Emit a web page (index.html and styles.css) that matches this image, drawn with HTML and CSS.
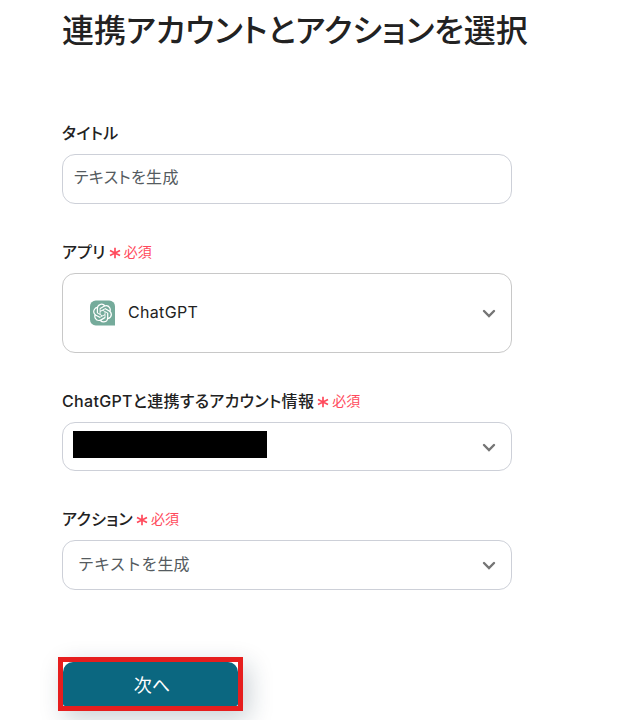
FILE: index.html
```
<!DOCTYPE html>
<html lang="ja">
<head>
<meta charset="utf-8">
<meta name="viewport" content="width=device-width, initial-scale=1">
<title>連携アカウントとアクションを選択</title>
<link rel="stylesheet" href="styles.css">
</head>
<body>
<main class="page">
  <h1 class="heading">連携アカウントとアクションを選択</h1>
  <form class="form">
    <div class="field">
      <div class="label-row"><label for="title">タイトル</label></div>
      <input class="control control-text" id="title" type="text" value="テキストを生成">
    </div>
    <div class="field">
      <div class="label-row">
        <label for="app">アプリ</label>
        <span class="required"><svg class="star" viewBox="0 0 12 12" aria-hidden="true"><path d="M6 .8v10.4M1 3.4l10 5.2M11 3.4L1 8.6"/></svg>必須</span>
      </div>
      <div class="select-box">
        <select class="control control-app" id="app"><option>ChatGPT</option></select>
        <svg class="app-icon" viewBox="0 0 26 26" aria-hidden="true">
          <path fill="#75ab9b" d="M6 0h14a6 6 0 0 1 6 6v20H6a6 6 0 0 1-6-6V6a6 6 0 0 1 6-6z"/>
          <path fill="#fff" transform="translate(3.2 3.2) scale(.82)" d="M22.2819 9.8211a5.9847 5.9847 0 0 0-.5157-4.9108 6.0462 6.0462 0 0 0-6.5098-2.9A6.0651 6.0651 0 0 0 4.9807 4.1818a5.9847 5.9847 0 0 0-3.9977 2.9 6.0462 6.0462 0 0 0 .7427 7.0966 5.98 5.98 0 0 0 .511 4.9107 6.051 6.051 0 0 0 6.5146 2.9001A5.9847 5.9847 0 0 0 13.2599 24a6.0557 6.0557 0 0 0 5.7718-4.2058 5.9894 5.9894 0 0 0 3.9977-2.9001 6.0557 6.0557 0 0 0-.7475-7.073zm-9.022 12.6081a4.4755 4.4755 0 0 1-2.8764-1.0408l.1419-.0804 4.7783-2.7582a.7948.7948 0 0 0 .3927-.6813v-6.7369l2.02 1.1686a.071.071 0 0 1 .038.052v5.5826a4.504 4.504 0 0 1-4.4945 4.4944zm-9.6607-4.1254a4.4708 4.4708 0 0 1-.5346-3.0137l.142.0852 4.783 2.7582a.7712.7712 0 0 0 .7806 0l5.8428-3.3685v2.3324a.0804.0804 0 0 1-.0332.0615L9.74 19.9502a4.4992 4.4992 0 0 1-6.1408-1.6464zM2.3408 7.8956a4.485 4.485 0 0 1 2.3655-1.9728V11.6a.7664.7664 0 0 0 .3879.6765l5.8144 3.3543-2.0201 1.1685a.0757.0757 0 0 1-.071 0l-4.8303-2.7865A4.504 4.504 0 0 1 2.3408 7.872zm16.5963 3.8558L13.1038 8.364 15.1192 7.2a.0757.0757 0 0 1 .071 0l4.8303 2.7913a4.4944 4.4944 0 0 1-.6765 8.1042v-5.6772a.79.79 0 0 0-.407-.667zm2.0107-3.0231l-.142-.0852-4.7735-2.7818a.7759.7759 0 0 0-.7854 0L9.409 9.2297V6.8974a.0662.0662 0 0 1 .0284-.0615l4.8303-2.7866a4.4992 4.4992 0 0 1 6.6802 4.66zM8.3065 12.863l-2.02-1.1638a.0804.0804 0 0 1-.038-.0567V6.0742a4.4992 4.4992 0 0 1 7.3757-3.4537l-.142.0805L8.704 5.459a.7948.7948 0 0 0-.3927.6813zm1.0976-2.3654l2.602-1.4998 2.6069 1.4998v2.9994l-2.5974 1.4997-2.6067-1.4997Z"/>
        </svg>
        <svg class="chevron" viewBox="0 0 14 10" aria-hidden="true"><path d="M2 2l5 5 5-5"/></svg>
      </div>
    </div>
    <div class="field">
      <div class="label-row">
        <label for="account">ChatGPTと連携するアカウント情報</label>
        <span class="required"><svg class="star" viewBox="0 0 12 12" aria-hidden="true"><path d="M6 .8v10.4M1 3.4l10 5.2M11 3.4L1 8.6"/></svg>必須</span>
      </div>
      <div class="select-box">
        <select class="control control-account" id="account"></select>
        <span class="redaction"></span>
        <svg class="chevron" viewBox="0 0 14 10" aria-hidden="true"><path d="M2 2l5 5 5-5"/></svg>
      </div>
    </div>
    <div class="field">
      <div class="label-row">
        <label for="action">アクション</label>
        <span class="required"><svg class="star" viewBox="0 0 12 12" aria-hidden="true"><path d="M6 .8v10.4M1 3.4l10 5.2M11 3.4L1 8.6"/></svg>必須</span>
      </div>
      <div class="select-box">
        <select class="control control-action" id="action"><option>テキストを生成</option></select>
        <svg class="chevron" viewBox="0 0 14 10" aria-hidden="true"><path d="M2 2l5 5 5-5"/></svg>
      </div>
    </div>
    <div class="highlight"><button class="next" type="button">次へ</button></div>
  </form>
</main>
</body>
</html>
```
FILE: styles.css
```
* {
  box-sizing: border-box;
}

body {
  margin: 0;
  background: #fff;
  color: #222;
  font-family: Inter, "Noto Sans CJK JP", sans-serif;
  font-size: 16px;
  font-feature-settings: "palt";
}

.page {
  min-height: 100vh;
  padding: 7px 62px 9px;
  overflow: hidden;
}

.heading {
  margin: 0 0 66px;
  font-size: 32px;
  line-height: 48px;
  font-weight: 500;
  white-space: nowrap;
}

.form {
  max-width: 450px;
}

.field {
  margin-bottom: 36px;
}

.label-row {
  display: flex;
  align-items: center;
  gap: 3px;
  height: 24px;
  margin-bottom: 9px;
  font-size: 16px;
  line-height: 24px;
  font-weight: 500;
  letter-spacing: 0.02em;
  white-space: nowrap;
}

.required {
  display: flex;
  align-items: center;
  gap: 3px;
  color: #ff4a5c;
  font-size: 14px;
  font-weight: 400;
  letter-spacing: 0;
}

.star {
  width: 12px;
  height: 12px;
  margin-top: 2px;
  fill: none;
  stroke: currentColor;
  stroke-width: 1.7;
}

.control {
  display: block;
  width: 100%;
  height: 50px;
  margin: 0;
  border: 1px solid #cdd0d8;
  border-radius: 13px;
  background: #fff;
  color: #555b60;
  font: inherit;
  font-feature-settings: inherit;
  letter-spacing: 0.02em;
  appearance: none;
}

.control-text {
  padding: 0 11px 6px;
}

.control-app {
  height: 80px;
  padding: 0 40px 2px 65px;
  border-color: #c8c8c8;
  color: #222;
}

.control-account {
  height: 49px;
}

.control-action {
  padding: 0 40px 2px 15px;
  font-feature-settings: normal;
  letter-spacing: 0;
}

.select-box {
  position: relative;
}

.app-icon {
  position: absolute;
  top: 27px;
  left: 28px;
  width: 25px;
  height: 26px;
  pointer-events: none;
}

.chevron {
  position: absolute;
  top: 50%;
  right: 16px;
  width: 14px;
  height: 10px;
  margin-top: -4px;
  fill: none;
  stroke: #757575;
  stroke-width: 2.4;
  stroke-linecap: round;
  pointer-events: none;
}

.redaction {
  position: absolute;
  top: 9px;
  left: 11px;
  width: 194px;
  height: 27px;
  background: #000;
}

.highlight {
  width: 185px;
  margin: 67px 0 0 -4px;
  border: 5px solid #e61e1e;
  background: #fff;
  box-shadow: 6px 8px 24px rgba(20, 50, 70, 0.22);
}

.next {
  display: block;
  width: 100%;
  height: 44px;
  padding: 0 0 0 3px;
  border: 0;
  border-radius: 10px 10px 2px 2px;
  background: #0b6780;
  color: #fff;
  font: inherit;
  font-size: 18px;
  font-feature-settings: inherit;
}
```
